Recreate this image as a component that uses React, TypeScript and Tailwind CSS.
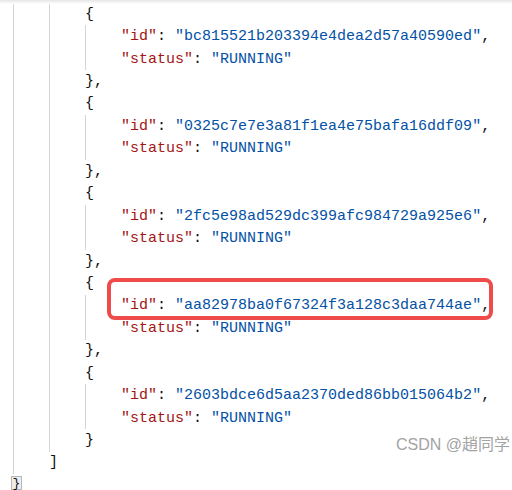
// JSON viewer snippet with a highlighted id row
const items = [
  'bc815521b203394e4dea2d57a40590ed',
  '0325c7e7e3a81f1ea4e75bafa16ddf09',
  '2fc5e98ad529dc399afc984729a925e6',
  'aa82978ba0f67324f3a128c3daa744ae',
  '2603bdce6d5aa2370ded86bb015064b2',
];

type Line = { guides: number; content: React.ReactNode };

function Guides({ n }: { n: number }) {
  return (
    <>
      {Array.from({ length: n }).map((_, i) => (
        <span key={i} className="w-[36px] shrink-0 self-stretch border-l border-[#d4d4d4]" />
      ))}
    </>
  );
}

const Key = ({ k }: { k: string }) => <span className="text-[#a31515]">"{k}"</span>;
const Str = ({ v }: { v: string }) => <span className="text-[#0451a5]">"{v}"</span>;

export default function App() {
  const lines: Line[] = [];
  items.forEach((id, i) => {
    lines.push({ guides: 2, content: <span>{'{'}</span> });
    lines.push({
      guides: 3,
      content: (
        <span>
          <Key k="id" />: <Str v={id} />,
        </span>
      ),
    });
    lines.push({
      guides: 3,
      content: (
        <span>
          <Key k="status" />: <Str v="RUNNING" />
        </span>
      ),
    });
    lines.push({ guides: 2, content: <span>{i < items.length - 1 ? '},' : '}'}</span> });
  });
  lines.push({ guides: 1, content: <span>]</span> });

  return (
    <div className="relative h-[490px] w-[512px] overflow-hidden bg-white font-['Liberation_Mono',monospace] text-[15px] text-[#111]">
      <div className="absolute inset-x-0 top-0 h-[4px] bg-gradient-to-b from-[#e6e6e6] to-white" />
      <div className="flex flex-col pl-[13px] pt-[3px]">
        {lines.map((l, i) => (
          <div key={i} className="flex h-[22.45px] items-center whitespace-pre leading-none">
            <Guides n={l.guides} />
            {l.content}
          </div>
        ))}
        <div className="flex h-[22.45px] items-start pt-[2px]">
          <span className="-ml-[2px] box-border inline-flex h-[14px] w-[11px] items-center justify-center border border-[#b8b8b8] bg-[#ededed] text-[13px] leading-none">
            {'}'}
          </span>
        </div>
      </div>
      <div className="absolute left-[107px] top-[278px] h-[42px] w-[386px] rounded-[8px] border-[4px] border-[#f04b4b]" />
      <div className="absolute right-[2px] top-[433px] font-['Liberation_Sans','Noto_Sans_CJK_SC',sans-serif] text-[16px] text-[#a3a3a3]">
        CSDN @趙同学
      </div>
    </div>
  );
}
